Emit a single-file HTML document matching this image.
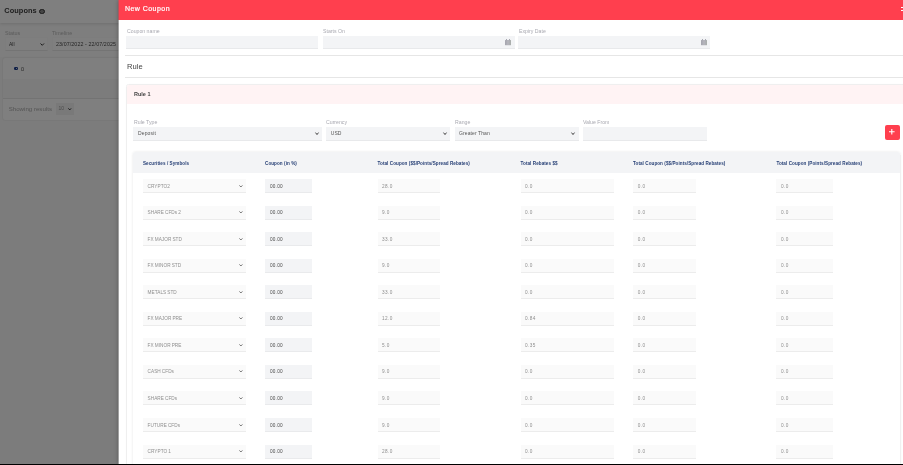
<!DOCTYPE html>
<html><head><meta charset="utf-8">
<style>
*{margin:0;padding:0;box-sizing:border-box}
html,body{width:903px;height:465px;overflow:hidden;background:#000}
body{position:relative;font-family:"Liberation Sans",sans-serif}
.abs{position:absolute}
svg{position:absolute;overflow:visible}
#page{will-change:transform;position:absolute;left:0;top:0;width:903px;height:464px;background:#f9f9f9;overflow:hidden}
#overlay{position:absolute;left:0;top:0;width:903px;height:464px;background:rgba(0,0,0,0.5)}
#panel{will-change:transform;position:absolute;left:119px;top:0;width:800px;height:464px;background:#fff;box-shadow:-1.5px 0 4px rgba(0,0,0,0.26);overflow:hidden}
.t{position:absolute;white-space:nowrap;line-height:1}
.inp{position:absolute;background:#f3f4f6;border-bottom:1px solid #e8e9eb}
.lbl{position:absolute;white-space:nowrap;line-height:1;font-size:5.2px;color:#a9a9b1;letter-spacing:0}
.hr{position:absolute;height:1px;background:#e6e6e6}
.th{position:absolute;white-space:nowrap;line-height:1;font-size:4.6px;font-weight:bold;color:#263f75;letter-spacing:.06px}
.rin{position:absolute;height:14px;background:#fafafa;border-bottom:1px solid #ececec}
.rtx{position:absolute;white-space:nowrap;line-height:1;font-size:4.7px;color:#8e8e8e;letter-spacing:.03px}
</style></head><body>
<div id="page">
  <div class="abs" style="left:0;top:23.2px;width:903px;height:34px;background:#fcfcfc"></div>
  <div class="abs" style="left:0;top:0;width:903px;height:23.2px;background:#fff;box-shadow:0 1px 3px rgba(0,0,0,0.13)"></div>
  <div class="t" style="left:4.3px;top:7.1px;font-size:7.4px;font-weight:bold;color:#3e3e3e;letter-spacing:.05px">Coupons</div>
  <div class="abs" style="left:39.4px;top:8.5px;width:5.3px;height:5.3px;border-radius:50%;background:#8a8a8a;border:1px solid #333"></div>
  
  
  <div class="lbl" style="left:5px;top:30.6px;color:#b8b8b8;font-size:5.4px">Status</div>
  <div class="abs" style="left:4.5px;top:37.3px;width:43px;height:14px;background:#fff;border:1px solid #fafafa;border-bottom-color:#e9e9e9"></div>
  <div class="t" style="left:9px;top:41.5px;font-size:5px;color:#444">All</div>
  <svg style="left:40px;top:42.5px" width="4.5" height="3" viewBox="0 0 4.5 3"><path d="M.5 .5 L2.25 2.3 L4 .5" fill="none" stroke="#222" stroke-width=".9"/></svg>
  <div class="lbl" style="left:52px;top:30.6px;color:#b8b8b8;font-size:5.4px">Timeline</div>
  <div class="abs" style="left:51.5px;top:37.3px;width:120px;height:14px;background:#fff;border:1px solid #fafafa;border-bottom-color:#e9e9e9"></div>
  <div class="t" style="left:56px;top:41.5px;font-size:5.3px;letter-spacing:.1px;color:#4a4a4a">23/07/2022 - 22/07/2025</div>
  <div class="abs" style="left:3.2px;top:57.8px;width:200px;height:41px;background:#fff;box-shadow:0 0 2px rgba(0,0,0,.14);border-radius:2px"></div>
  <div class="abs" style="left:3.2px;top:78.8px;width:200px;height:19.4px;background:#f9f9f9"></div>
  <div class="abs" style="left:13.5px;top:66.8px;width:4.8px;height:3.3px;border-radius:1.2px;background:#1f3f8f"></div>
  <div class="abs" style="left:15.6px;top:67.6px;width:1.7px;height:1.7px;border-radius:50%;background:#fff"></div>
  <div class="abs" style="left:21.4px;top:66.9px;width:2.6px;height:4px;border-radius:1.3px 1.3px .6px .6px;border:.5px solid #aaa"></div>
  <div class="abs" style="left:3.2px;top:98.6px;width:200px;height:21px;background:#fff;box-shadow:0 0 2px rgba(0,0,0,.14);border-radius:0 0 2px 2px"></div>
  <div class="abs" style="left:3.2px;top:98.2px;width:200px;height:1px;background:#e6e6e6"></div>
  <div class="t" style="left:8.7px;top:106.2px;font-size:6.1px;color:#aaa;letter-spacing:.02px">Showing results</div>
  <div class="abs" style="left:55.8px;top:103.3px;width:18.7px;height:11.3px;background:#f2f2f2"></div>
  <div class="t" style="left:58.6px;top:106px;font-size:5px;color:#999">10</div>
  <svg style="left:67.9px;top:107.6px" width="3.5" height="2.5" viewBox="0 0 3.5 2.5"><path d="M.4 .4 L1.75 1.9 L3.1 .4" fill="none" stroke="#222" stroke-width=".9"/></svg>
</div>
<div id="overlay"></div>
<div class="abs" style="left:118px;top:19.5px;width:1px;height:444.5px;background:rgba(255,255,255,0.38);z-index:5"></div>
<div class="abs" style="left:118px;top:0;width:1px;height:19.5px;background:rgba(255,63,78,0.45);z-index:5"></div>
<div id="panel">
  <div class="abs" style="left:0;top:0;width:800px;height:19.5px;background:#ff3f4e"></div>
  <div class="t" style="left:6px;top:5px;font-size:7px;letter-spacing:.45px;color:#fff;-webkit-text-stroke:.2px #fff">New Coupon</div>
  <div class="abs" style="left:782px;top:7px;width:4px;height:1.1px;background:#fff"></div><div class="abs" style="left:782px;top:10px;width:4px;height:1.1px;background:#fff"></div>

  <div class="lbl" style="left:8px;top:29.3px">Coupon name</div>
  <div class="inp" style="left:7.2px;top:35.6px;width:192.3px;height:13.4px"></div>
  <div class="lbl" style="left:204px;top:29.3px">Starts On</div>
  <div class="inp" style="left:203.8px;top:35.6px;width:191.8px;height:13.4px"></div>
  <svg style="left:385.6px;top:38.5px" width="6" height="6.2" viewBox="0 0 6 6.2"><rect x="0" y=".9" width="6" height="5.3" rx=".5" fill="#b3b3ba"/><rect x=".2" y="1.2" width="1.2" height="4.8" fill="#a4a4ae"/><rect x="4.6" y="1.2" width="1.2" height="4.8" fill="#a9aeaa"/><rect x="1" y="0" width="1" height="1.5" fill="#a8a8b2"/><rect x="4" y="0" width="1" height="1.5" fill="#a8a8b2"/></svg>
  <div class="lbl" style="left:400px;top:29.3px">Expiry Date</div>
  <div class="inp" style="left:399.4px;top:35.6px;width:192.1px;height:13.4px"></div>
  <svg style="left:581.8px;top:38.5px" width="6" height="6.2" viewBox="0 0 6 6.2"><rect x="0" y=".9" width="6" height="5.3" rx=".5" fill="#b3b3ba"/><rect x=".2" y="1.2" width="1.2" height="4.8" fill="#a4a4ae"/><rect x="4.6" y="1.2" width="1.2" height="4.8" fill="#a9aeaa"/><rect x="1" y="0" width="1" height="1.5" fill="#a8a8b2"/><rect x="4" y="0" width="1" height="1.5" fill="#a8a8b2"/></svg>

  <div class="hr" style="left:5.5px;top:55px;width:800px"></div>
  <div class="t" style="left:8px;top:62.5px;font-size:7.6px;color:#444">Rule</div>
  <div class="hr" style="left:5.5px;top:77px;width:800px"></div>

  <div class="abs" style="left:7.2px;top:84.2px;width:800px;height:400px;border:1px solid #efefef;border-radius:2.5px;box-shadow:0 0 1px rgba(0,0,0,.04)"></div>
  <div class="abs" style="left:8.2px;top:85.2px;width:800px;height:18.6px;background:#fff3f4;border-radius:2px 0 0 0"></div>
  <div class="t" style="left:15px;top:92.3px;font-size:5.5px;font-weight:bold;color:#444">Rule 1</div>

  <div class="lbl" style="left:15px;top:120.4px">Rule Type</div>
  <div class="inp" style="left:14.4px;top:126.8px;width:188.8px;height:14px"></div>
  <div class="t" style="left:19px;top:131.3px;font-size:5px;letter-spacing:.15px;color:#555">Deposit</div>
  <svg style="left:196px;top:131.8px" width="4" height="3.4" viewBox="0 0 4 3.4"><path d="M.5 .6 L2 2.6 L3.5 .6" fill="none" stroke="#444" stroke-width="1"/></svg>
  <div class="lbl" style="left:207px;top:120.4px">Currency</div>
  <div class="inp" style="left:207px;top:126.8px;width:124.2px;height:14px"></div>
  <div class="t" style="left:211.8px;top:131.3px;font-size:5px;color:#555">USD</div>
  <svg style="left:324px;top:131.8px" width="4" height="3.4" viewBox="0 0 4 3.4"><path d="M.5 .6 L2 2.6 L3.5 .6" fill="none" stroke="#444" stroke-width="1"/></svg>
  <div class="lbl" style="left:336px;top:120.4px">Range</div>
  <div class="inp" style="left:335.9px;top:126.8px;width:123.9px;height:14px"></div>
  <div class="t" style="left:340px;top:131.3px;font-size:5px;color:#555;letter-spacing:.1px">Greater Than</div>
  <svg style="left:452px;top:131.8px" width="4" height="3.4" viewBox="0 0 4 3.4"><path d="M.5 .6 L2 2.6 L3.5 .6" fill="none" stroke="#444" stroke-width="1"/></svg>
  <div class="lbl" style="left:464px;top:120.4px">Value From</div>
  <div class="inp" style="left:464px;top:126.8px;width:124.2px;height:14px"></div>

  <div class="abs" style="left:765.8px;top:125.4px;width:15.2px;height:14.4px;border-radius:2px;background:#ff3f4e"></div>
  <svg style="left:770.4px;top:128.9px" width="5.6" height="5.4" viewBox="0 0 5.6 5.4"><path d="M2.8 0 V5.4 M0 2.7 H5.6" fill="none" stroke="#fff" stroke-width="1.1"/></svg>

  <div class="abs" style="left:13.8px;top:152.4px;width:767px;height:400px;background:#fff;box-shadow:0 0 2.5px rgba(0,0,0,0.12);border-radius:2.5px"></div>
  <div class="abs" style="left:781px;top:155px;width:1px;height:400px;background:#f0f0f0"></div>
  <div class="abs" style="left:13.8px;top:152.4px;width:767px;height:20.3px;background:#f3f4f6;border-radius:2.5px 2.5px 0 0"></div>
  <div class="th" style="left:24px;top:161.8px">Securities / Symbols</div>
  <div class="th" style="left:146px;top:161.8px">Coupon (in %)</div>
  <div class="th" style="left:258.5px;top:161.8px">Total Coupon ($$/Points/Spread Rebates)</div>
  <div class="th" style="left:401.5px;top:161.8px">Total Rebates $$</div>
  <div class="th" style="left:514px;top:161.8px">Total Coupon ($$/Points/Spread Rebates)</div>
  <div class="th" style="left:657.4px;top:161.8px">Total Coupon (Points/Spread Rebates)</div>
  <div class="rin" style="left:24px;top:179.0px;width:103px"></div>
<div class="rtx" style="left:28.6px;top:184.6px;word-spacing:-.2px">CRYPTO2</div>
<svg style="left:119.6px;top:184.6px" width="3.8" height="2.6" viewBox="0 0 3.8 2.6"><path d="M.4 .4 L1.9 2 L3.4 .4" fill="none" stroke="#555" stroke-width=".8"/></svg>
<div class="rin" style="left:146px;top:179.0px;width:47px;background:#f3f4f6;border-bottom-color:#e9eaec"></div>
<div class="rtx" style="left:150.9px;top:184.6px;color:#4a4a4a;letter-spacing:.25px">00.00</div>
<div class="rin" style="left:258.5px;top:179.0px;width:62px"></div>
<div class="rtx" style="left:263px;top:184.6px;letter-spacing:.45px">28.0</div>
<div class="rin" style="left:401.5px;top:179.0px;width:93.2px"></div>
<div class="rtx" style="left:406px;top:184.6px;letter-spacing:.45px">0.0</div>
<div class="rin" style="left:514.2px;top:179.0px;width:62.4px"></div>
<div class="rtx" style="left:518.8px;top:184.6px;letter-spacing:.45px">0.0</div>
<div class="rin" style="left:657.4px;top:179.0px;width:57px"></div>
<div class="rtx" style="left:662px;top:184.6px;letter-spacing:.45px">0.0</div>
<div class="rin" style="left:24px;top:205.55px;width:103px"></div>
<div class="rtx" style="left:28.6px;top:211.15px;word-spacing:-.2px">SHARE CFDs 2</div>
<svg style="left:119.6px;top:211.15px" width="3.8" height="2.6" viewBox="0 0 3.8 2.6"><path d="M.4 .4 L1.9 2 L3.4 .4" fill="none" stroke="#555" stroke-width=".8"/></svg>
<div class="rin" style="left:146px;top:205.55px;width:47px;background:#f3f4f6;border-bottom-color:#e9eaec"></div>
<div class="rtx" style="left:150.9px;top:211.15px;color:#4a4a4a;letter-spacing:.25px">00.00</div>
<div class="rin" style="left:258.5px;top:205.55px;width:62px"></div>
<div class="rtx" style="left:263px;top:211.15px;letter-spacing:.45px">9.0</div>
<div class="rin" style="left:401.5px;top:205.55px;width:93.2px"></div>
<div class="rtx" style="left:406px;top:211.15px;letter-spacing:.45px">0.0</div>
<div class="rin" style="left:514.2px;top:205.55px;width:62.4px"></div>
<div class="rtx" style="left:518.8px;top:211.15px;letter-spacing:.45px">0.0</div>
<div class="rin" style="left:657.4px;top:205.55px;width:57px"></div>
<div class="rtx" style="left:662px;top:211.15px;letter-spacing:.45px">0.0</div>
<div class="rin" style="left:24px;top:232.1px;width:103px"></div>
<div class="rtx" style="left:28.6px;top:237.7px;word-spacing:-.2px">FX MAJOR STD</div>
<svg style="left:119.6px;top:237.7px" width="3.8" height="2.6" viewBox="0 0 3.8 2.6"><path d="M.4 .4 L1.9 2 L3.4 .4" fill="none" stroke="#555" stroke-width=".8"/></svg>
<div class="rin" style="left:146px;top:232.1px;width:47px;background:#f3f4f6;border-bottom-color:#e9eaec"></div>
<div class="rtx" style="left:150.9px;top:237.7px;color:#4a4a4a;letter-spacing:.25px">00.00</div>
<div class="rin" style="left:258.5px;top:232.1px;width:62px"></div>
<div class="rtx" style="left:263px;top:237.7px;letter-spacing:.45px">33.0</div>
<div class="rin" style="left:401.5px;top:232.1px;width:93.2px"></div>
<div class="rtx" style="left:406px;top:237.7px;letter-spacing:.45px">0.0</div>
<div class="rin" style="left:514.2px;top:232.1px;width:62.4px"></div>
<div class="rtx" style="left:518.8px;top:237.7px;letter-spacing:.45px">0.0</div>
<div class="rin" style="left:657.4px;top:232.1px;width:57px"></div>
<div class="rtx" style="left:662px;top:237.7px;letter-spacing:.45px">0.0</div>
<div class="rin" style="left:24px;top:258.65px;width:103px"></div>
<div class="rtx" style="left:28.6px;top:264.25px;word-spacing:-.2px">FX MINOR STD</div>
<svg style="left:119.6px;top:264.25px" width="3.8" height="2.6" viewBox="0 0 3.8 2.6"><path d="M.4 .4 L1.9 2 L3.4 .4" fill="none" stroke="#555" stroke-width=".8"/></svg>
<div class="rin" style="left:146px;top:258.65px;width:47px;background:#f3f4f6;border-bottom-color:#e9eaec"></div>
<div class="rtx" style="left:150.9px;top:264.25px;color:#4a4a4a;letter-spacing:.25px">00.00</div>
<div class="rin" style="left:258.5px;top:258.65px;width:62px"></div>
<div class="rtx" style="left:263px;top:264.25px;letter-spacing:.45px">9.0</div>
<div class="rin" style="left:401.5px;top:258.65px;width:93.2px"></div>
<div class="rtx" style="left:406px;top:264.25px;letter-spacing:.45px">0.0</div>
<div class="rin" style="left:514.2px;top:258.65px;width:62.4px"></div>
<div class="rtx" style="left:518.8px;top:264.25px;letter-spacing:.45px">0.0</div>
<div class="rin" style="left:657.4px;top:258.65px;width:57px"></div>
<div class="rtx" style="left:662px;top:264.25px;letter-spacing:.45px">0.0</div>
<div class="rin" style="left:24px;top:285.2px;width:103px"></div>
<div class="rtx" style="left:28.6px;top:290.8px;word-spacing:-.2px">METALS STD</div>
<svg style="left:119.6px;top:290.8px" width="3.8" height="2.6" viewBox="0 0 3.8 2.6"><path d="M.4 .4 L1.9 2 L3.4 .4" fill="none" stroke="#555" stroke-width=".8"/></svg>
<div class="rin" style="left:146px;top:285.2px;width:47px;background:#f3f4f6;border-bottom-color:#e9eaec"></div>
<div class="rtx" style="left:150.9px;top:290.8px;color:#4a4a4a;letter-spacing:.25px">00.00</div>
<div class="rin" style="left:258.5px;top:285.2px;width:62px"></div>
<div class="rtx" style="left:263px;top:290.8px;letter-spacing:.45px">33.0</div>
<div class="rin" style="left:401.5px;top:285.2px;width:93.2px"></div>
<div class="rtx" style="left:406px;top:290.8px;letter-spacing:.45px">0.0</div>
<div class="rin" style="left:514.2px;top:285.2px;width:62.4px"></div>
<div class="rtx" style="left:518.8px;top:290.8px;letter-spacing:.45px">0.0</div>
<div class="rin" style="left:657.4px;top:285.2px;width:57px"></div>
<div class="rtx" style="left:662px;top:290.8px;letter-spacing:.45px">0.0</div>
<div class="rin" style="left:24px;top:311.75px;width:103px"></div>
<div class="rtx" style="left:28.6px;top:317.35px;word-spacing:-.2px">FX MAJOR PRE</div>
<svg style="left:119.6px;top:317.35px" width="3.8" height="2.6" viewBox="0 0 3.8 2.6"><path d="M.4 .4 L1.9 2 L3.4 .4" fill="none" stroke="#555" stroke-width=".8"/></svg>
<div class="rin" style="left:146px;top:311.75px;width:47px;background:#f3f4f6;border-bottom-color:#e9eaec"></div>
<div class="rtx" style="left:150.9px;top:317.35px;color:#4a4a4a;letter-spacing:.25px">00.00</div>
<div class="rin" style="left:258.5px;top:311.75px;width:62px"></div>
<div class="rtx" style="left:263px;top:317.35px;letter-spacing:.45px">12.0</div>
<div class="rin" style="left:401.5px;top:311.75px;width:93.2px"></div>
<div class="rtx" style="left:406px;top:317.35px;letter-spacing:.45px">0.84</div>
<div class="rin" style="left:514.2px;top:311.75px;width:62.4px"></div>
<div class="rtx" style="left:518.8px;top:317.35px;letter-spacing:.45px">0.0</div>
<div class="rin" style="left:657.4px;top:311.75px;width:57px"></div>
<div class="rtx" style="left:662px;top:317.35px;letter-spacing:.45px">0.0</div>
<div class="rin" style="left:24px;top:338.3px;width:103px"></div>
<div class="rtx" style="left:28.6px;top:343.9px;word-spacing:-.2px">FX MINOR PRE</div>
<svg style="left:119.6px;top:343.9px" width="3.8" height="2.6" viewBox="0 0 3.8 2.6"><path d="M.4 .4 L1.9 2 L3.4 .4" fill="none" stroke="#555" stroke-width=".8"/></svg>
<div class="rin" style="left:146px;top:338.3px;width:47px;background:#f3f4f6;border-bottom-color:#e9eaec"></div>
<div class="rtx" style="left:150.9px;top:343.9px;color:#4a4a4a;letter-spacing:.25px">00.00</div>
<div class="rin" style="left:258.5px;top:338.3px;width:62px"></div>
<div class="rtx" style="left:263px;top:343.9px;letter-spacing:.45px">5.0</div>
<div class="rin" style="left:401.5px;top:338.3px;width:93.2px"></div>
<div class="rtx" style="left:406px;top:343.9px;letter-spacing:.45px">0.35</div>
<div class="rin" style="left:514.2px;top:338.3px;width:62.4px"></div>
<div class="rtx" style="left:518.8px;top:343.9px;letter-spacing:.45px">0.0</div>
<div class="rin" style="left:657.4px;top:338.3px;width:57px"></div>
<div class="rtx" style="left:662px;top:343.9px;letter-spacing:.45px">0.0</div>
<div class="rin" style="left:24px;top:364.85px;width:103px"></div>
<div class="rtx" style="left:28.6px;top:370.45px;word-spacing:-.2px">CASH CFDs</div>
<svg style="left:119.6px;top:370.45px" width="3.8" height="2.6" viewBox="0 0 3.8 2.6"><path d="M.4 .4 L1.9 2 L3.4 .4" fill="none" stroke="#555" stroke-width=".8"/></svg>
<div class="rin" style="left:146px;top:364.85px;width:47px;background:#f3f4f6;border-bottom-color:#e9eaec"></div>
<div class="rtx" style="left:150.9px;top:370.45px;color:#4a4a4a;letter-spacing:.25px">00.00</div>
<div class="rin" style="left:258.5px;top:364.85px;width:62px"></div>
<div class="rtx" style="left:263px;top:370.45px;letter-spacing:.45px">9.0</div>
<div class="rin" style="left:401.5px;top:364.85px;width:93.2px"></div>
<div class="rtx" style="left:406px;top:370.45px;letter-spacing:.45px">0.0</div>
<div class="rin" style="left:514.2px;top:364.85px;width:62.4px"></div>
<div class="rtx" style="left:518.8px;top:370.45px;letter-spacing:.45px">0.0</div>
<div class="rin" style="left:657.4px;top:364.85px;width:57px"></div>
<div class="rtx" style="left:662px;top:370.45px;letter-spacing:.45px">0.0</div>
<div class="rin" style="left:24px;top:391.4px;width:103px"></div>
<div class="rtx" style="left:28.6px;top:397.0px;word-spacing:-.2px">SHARE CFDs</div>
<svg style="left:119.6px;top:397.0px" width="3.8" height="2.6" viewBox="0 0 3.8 2.6"><path d="M.4 .4 L1.9 2 L3.4 .4" fill="none" stroke="#555" stroke-width=".8"/></svg>
<div class="rin" style="left:146px;top:391.4px;width:47px;background:#f3f4f6;border-bottom-color:#e9eaec"></div>
<div class="rtx" style="left:150.9px;top:397.0px;color:#4a4a4a;letter-spacing:.25px">00.00</div>
<div class="rin" style="left:258.5px;top:391.4px;width:62px"></div>
<div class="rtx" style="left:263px;top:397.0px;letter-spacing:.45px">9.0</div>
<div class="rin" style="left:401.5px;top:391.4px;width:93.2px"></div>
<div class="rtx" style="left:406px;top:397.0px;letter-spacing:.45px">0.0</div>
<div class="rin" style="left:514.2px;top:391.4px;width:62.4px"></div>
<div class="rtx" style="left:518.8px;top:397.0px;letter-spacing:.45px">0.0</div>
<div class="rin" style="left:657.4px;top:391.4px;width:57px"></div>
<div class="rtx" style="left:662px;top:397.0px;letter-spacing:.45px">0.0</div>
<div class="rin" style="left:24px;top:417.95px;width:103px"></div>
<div class="rtx" style="left:28.6px;top:423.55px;word-spacing:-.2px">FUTURE CFDs</div>
<svg style="left:119.6px;top:423.55px" width="3.8" height="2.6" viewBox="0 0 3.8 2.6"><path d="M.4 .4 L1.9 2 L3.4 .4" fill="none" stroke="#555" stroke-width=".8"/></svg>
<div class="rin" style="left:146px;top:417.95px;width:47px;background:#f3f4f6;border-bottom-color:#e9eaec"></div>
<div class="rtx" style="left:150.9px;top:423.55px;color:#4a4a4a;letter-spacing:.25px">00.00</div>
<div class="rin" style="left:258.5px;top:417.95px;width:62px"></div>
<div class="rtx" style="left:263px;top:423.55px;letter-spacing:.45px">9.0</div>
<div class="rin" style="left:401.5px;top:417.95px;width:93.2px"></div>
<div class="rtx" style="left:406px;top:423.55px;letter-spacing:.45px">0.0</div>
<div class="rin" style="left:514.2px;top:417.95px;width:62.4px"></div>
<div class="rtx" style="left:518.8px;top:423.55px;letter-spacing:.45px">0.0</div>
<div class="rin" style="left:657.4px;top:417.95px;width:57px"></div>
<div class="rtx" style="left:662px;top:423.55px;letter-spacing:.45px">0.0</div>
<div class="rin" style="left:24px;top:444.5px;width:103px"></div>
<div class="rtx" style="left:28.6px;top:450.1px;word-spacing:-.2px">CRYPTO 1</div>
<svg style="left:119.6px;top:450.1px" width="3.8" height="2.6" viewBox="0 0 3.8 2.6"><path d="M.4 .4 L1.9 2 L3.4 .4" fill="none" stroke="#555" stroke-width=".8"/></svg>
<div class="rin" style="left:146px;top:444.5px;width:47px;background:#f3f4f6;border-bottom-color:#e9eaec"></div>
<div class="rtx" style="left:150.9px;top:450.1px;color:#4a4a4a;letter-spacing:.25px">00.00</div>
<div class="rin" style="left:258.5px;top:444.5px;width:62px"></div>
<div class="rtx" style="left:263px;top:450.1px;letter-spacing:.45px">28.0</div>
<div class="rin" style="left:401.5px;top:444.5px;width:93.2px"></div>
<div class="rtx" style="left:406px;top:450.1px;letter-spacing:.45px">0.0</div>
<div class="rin" style="left:514.2px;top:444.5px;width:62.4px"></div>
<div class="rtx" style="left:518.8px;top:450.1px;letter-spacing:.45px">0.0</div>
<div class="rin" style="left:657.4px;top:444.5px;width:57px"></div>
<div class="rtx" style="left:662px;top:450.1px;letter-spacing:.45px">0.0</div>
</div>
</body></html>
